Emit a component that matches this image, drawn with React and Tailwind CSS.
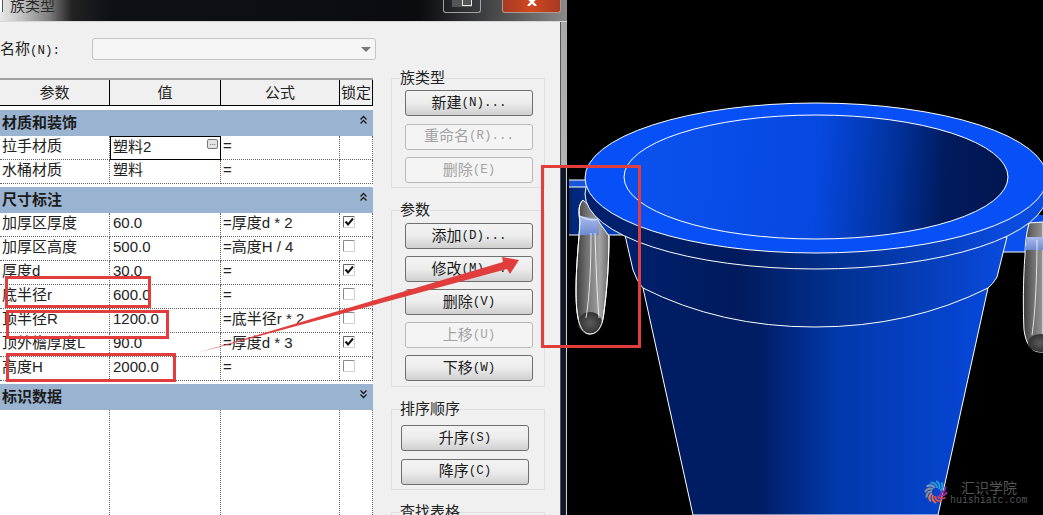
const rowsA = [
  { name: '拉手材质', value: '塑料2', formula: '=', active: true },
  { name: '水桶材质', value: '塑料', formula: '=' },
];

const rowsB = [
  { name: '加厚区厚度', value: '60.0', formula: '=厚度d * 2', check: true },
  { name: '加厚区高度', value: '500.0', formula: '=高度H / 4', check: false },
  { name: '厚度d', value: '30.0', formula: '=', check: true },
  { name: '底半径r', value: '600.0', formula: '=', check: false },
  { name: '顶半径R', value: '1200.0', formula: '=底半径r * 2', check: false },
  { name: '顶外檐厚度L', value: '90.0', formula: '=厚度d * 3', check: true },
  { name: '高度H', value: '2000.0', formula: '=', check: false },
];

const spokes = [
  { a: 0, c: '#2a9bd6' }, { a: 30, c: '#2a9bd6' }, { a: 60, c: '#8a2fb0' }, { a: 90, c: '#a02fa0' },
  { a: 120, c: '#c9405e' }, { a: 150, c: '#d8504f' }, { a: 180, c: '#d8694f' }, { a: 210, c: '#d8795f' },
  { a: 240, c: '#8a8f9a' }, { a: 270, c: '#8a8f9a' }, { a: 300, c: '#7a9ab0' }, { a: 330, c: '#2a9bd6' },
];

function Chevrons({ down }) {
  return (
    <svg width="9" height="10" viewBox="0 0 9 10" fill="none" stroke="#1a1a1a" strokeWidth="1.3" className={down ? 'rotate-180' : ''}>
      <path d="M1.5 4.5 L4.5 1.5 L7.5 4.5" />
      <path d="M1.5 8.5 L4.5 5.5 L7.5 8.5" />
    </svg>
  );
}

function Section({ title, down, className = '' }) {
  return (
    <div className={`h-[26px] bg-[#9ab3d1] flex items-center justify-between pl-[2px] pr-[5px] w-[373px] ${className}`}>
      <span className="text-[15px] leading-[20px] font-bold text-[#1c1c1c]">{title}</span>
      <span className="-mt-[6px]"><Chevrons down={down} /></span>
    </div>
  );
}

function CheckBox({ on }) {
  return (
    <svg width="12" height="12" viewBox="0 0 12 12" fill="none" className="-mt-[3px]">
      <path d="M0.5 11.5 V0.5 H11.5" stroke={on ? '#666' : '#8a8a8a'} />
      <path d="M11.5 0.5 V11.5 H0.5" stroke="#d0d0d0" />
      {on && <path d="M2.5 5.5 L5 8.5 L10 2.5" stroke="#111" strokeWidth="2" />}
    </svg>
  );
}

function Row({ row }) {
  const cell = 'h-[24px] pb-[3px] border-r border-b border-dotted border-[#666] flex items-center text-[15px] leading-[20px] text-[#222] overflow-hidden whitespace-nowrap';
  return (
    <div className="grid grid-cols-[110px_111px_119px_33px]">
      <div className={`${cell} pl-[2px]`}>{row.name}</div>
      {row.active ? (
        <div className="h-[24px] pb-[3px] border border-black flex items-center justify-between pl-[2px] pr-[2px] text-[15px] leading-[20px] text-[#222]">
          {row.value}
          <span className="w-[11px] h-[10px] -mt-[5px] rounded-[2px] border border-[#777] bg-[#e4e4e4] text-[8px] leading-[6px] text-center text-[#333]">...</span>
        </div>
      ) : (
        <div className={`${cell} pl-[3px]`}>{row.value}</div>
      )}
      <div className={`${cell} pl-[2px]`}>{row.formula}</div>
      <div className={`${cell} justify-start pl-[3px]`}>
        {row.check !== undefined && <CheckBox on={row.check} />}
      </div>
    </div>
  );
}

function Btn({ cn, keyText, disabled }) {
  return (
    <button
      className={`w-[128px] h-[26px] shrink-0 rounded-[3px] border flex items-center justify-center text-[15px] ${
        disabled
          ? 'border-[#b9b9b9] bg-[#f4f4f4] text-[#a3a3a3]'
          : 'border-[#6f6f6f] bg-gradient-to-b from-[#f3f3f3] via-[#ececec] to-[#cfcfcf] text-[#1a1a1a]'
      }`}
    >
      {cn}
      <span className="font-['Liberation_Mono',monospace] text-[12.5px]">{keyText}</span>
    </button>
  );
}

function Group({ label, children, height, inner }) {
  return (
    <fieldset className={`border border-[#dedede] shrink-0 ${height}`}>
      <legend className="ml-[8px] text-[15px] leading-[18px] text-[#222]">{label}</legend>
      <div className={`flex flex-col ${inner}`}>{children}</div>
    </fieldset>
  );
}

function Bucket() {
  return (
    <svg viewBox="567 0 476 515" className="w-full h-full block" stroke="#fff" strokeWidth="1">
      <defs>
        <linearGradient id="bowl" gradientUnits="userSpaceOnUse" x1="624" y1="170" x2="1010" y2="200">
          <stop offset="0" stopColor="#0a52f0" />
          <stop offset="0.5" stopColor="#0648e0" />
          <stop offset="0.7" stopColor="#01319a" />
          <stop offset="0.83" stopColor="#001a5c" />
          <stop offset="1" stopColor="#001650" />
        </linearGradient>
        <linearGradient id="band" gradientUnits="userSpaceOnUse" x1="620" y1="0" x2="1010" y2="0">
          <stop offset="0" stopColor="#00206e" />
          <stop offset="0.3" stopColor="#001a5c" />
          <stop offset="0.55" stopColor="#01308f" />
          <stop offset="1" stopColor="#0a4be0" />
        </linearGradient>
        <linearGradient id="cone" gradientUnits="userSpaceOnUse" x1="650" y1="0" x2="985" y2="0">
          <stop offset="0" stopColor="#001c62" />
          <stop offset="0.32" stopColor="#001c62" />
          <stop offset="0.55" stopColor="#0138aa" />
          <stop offset="1" stopColor="#0647d8" />
        </linearGradient>
        <linearGradient id="tab" gradientUnits="userSpaceOnUse" x1="569" y1="0" x2="625" y2="0">
          <stop offset="0" stopColor="#00236e" />
          <stop offset="1" stopColor="#0a45d2" />
        </linearGradient>
        <linearGradient id="handle" gradientUnits="userSpaceOnUse" x1="576" y1="0" x2="609" y2="0">
          <stop offset="0" stopColor="#3a3a3a" />
          <stop offset="0.3" stopColor="#6e6e6e" />
          <stop offset="0.72" stopColor="#a4a4a4" />
          <stop offset="1" stopColor="#6a6a6a" />
        </linearGradient>
        <linearGradient id="handleR" gradientUnits="userSpaceOnUse" x1="1023" y1="0" x2="1056" y2="0">
          <stop offset="0" stopColor="#3a3a3a" />
          <stop offset="0.3" stopColor="#6e6e6e" />
          <stop offset="0.72" stopColor="#a4a4a4" />
          <stop offset="1" stopColor="#6a6a6a" />
        </linearGradient>
        <linearGradient id="pale" x1="0" y1="0" x2="0" y2="1">
          <stop offset="0" stopColor="#a9bcee" />
          <stop offset="1" stopColor="#6f8ad0" />
        </linearGradient>
        <radialGradient id="cap">
          <stop offset="0" stopColor="#5a5a5a" />
          <stop offset="1" stopColor="#333" />
        </radialGradient>
      </defs>

      {/* side tabs */}
      <path d="M569 180 H640 V235 H569 Z" fill="url(#tab)" stroke="none" />
      <path d="M569 180 H590 V187 H569 Z" fill="#1a56d8" stroke="none" />
      <path d="M569 180 H590 M569 187 H590 M569 235 H628" fill="none" />
      <path d="M1000 215 H1043 V252 H1000 Z" fill="#0a50ee" stroke="none" />
      <path d="M1002 252 H1043" fill="none" />

      {/* handles */}
      <path d="M583 200 C579 204 578 210 580 222 C579 240 576 265 576 290 C576 312 578 334 590 334 C600 334 603 322 604 312 C607 290 609 262 609 236 L599 222 C598 216 590 206 583 200 Z" fill="url(#handle)" />
      <path d="M580 216 L598 219 L599 235 L579 235 Z" fill="url(#pale)" stroke="none" />
      <ellipse cx="590" cy="323" rx="12" ry="11" fill="url(#cap)" stroke="none" />
      <path d="M583 200 C579 204 578 210 580 222 C579 240 576 265 576 290 C576 312 578 334 590 334 C600 334 603 322 604 312 C607 290 609 262 609 236" fill="none" />
      <path d="M591 233 C591 260 590 295 586 318 M595 233 C596 265 597 295 599 318 M580 216 Q590 222 598 219" fill="none" strokeWidth="0.8" />
      <path d="M1029 223 C1026 235 1025 245 1025 255 C1023 280 1023 310 1024 330 C1026 345 1032 352 1040 352 H1043 V222 Z" fill="url(#handleR)" />
      <path d="M1027 237 H1043 V250 H1025 Z" fill="url(#pale)" stroke="none" />
      <ellipse cx="1040" cy="343" rx="12" ry="9" fill="url(#cap)" stroke="none" />
      <path d="M1037 240 C1037 280 1035 315 1032 335" fill="none" strokeWidth="0.8" />

      {/* cone and thick zone */}
      <path d="M643 288 L693 515 H938 L988 288 Z" fill="url(#cone)" />
      <path d="M625 235 L633 270 Q637 282 643 288 Q720 327 815 327 Q910 327 988 288 Q993 284 997 277 L1007 237 Z" fill="url(#band)" />

      {/* rim */}
      <ellipse cx="816" cy="194" rx="231" ry="75" fill="url(#band)" />
      <ellipse cx="816" cy="178" rx="231" ry="75" fill="#0750f7" />
      <ellipse cx="816" cy="177" rx="192" ry="62" fill="url(#bowl)" />

      {/* watermark logo */}
      <g fill="none" strokeWidth="2">
        {spokes.map((s) => (
          <path key={s.a} d="M936 481 Q941 484 939 489" stroke={s.c} transform={`rotate(${s.a} 936 492)`} />
        ))}
      </g>
    </svg>
  );
}

export default function App() {
  return (
    <div className="relative w-[1043px] h-[515px] overflow-hidden flex bg-black font-['Liberation_Sans','Noto_Sans_CJK_SC',sans-serif]">
      {/* dialog window with its frame */}
      <div className="w-[567px] h-full shrink-0 flex flex-col">
        <div className="h-[22px] shrink-0 pr-[6px] flex items-start justify-between border-b border-[#d8d8d8] bg-[linear-gradient(90deg,#e8e8e8_0,#c0c0c0_22px,#808080_48px,#222_72px,#0d1116_110px,#0a0c10_420px,#555_510px,#8a8a8a_100%)]">
          <div className="flex items-center h-[12px]">
            <span className="w-[3px] h-[12px] bg-white border-r border-[#555]" />
            <span className="ml-[7px] text-[15px] leading-[12px] text-[#2a2a2a]">族类型</span>
          </div>
          <div className="flex items-start">
            <div className="w-[38px] h-[13px] mr-[21px] rounded-b-[3px] border border-t-0 border-[#a0a4a8] flex justify-center">
              <span className="w-[20px] h-[7px] bg-[#555] flex justify-end">
                <span className="w-[10px] h-[6px] border border-t-0 border-[#e8e8e8]" />
              </span>
            </div>
            <div className="w-[59px] h-[13px] rounded-b-[3px] border border-t-0 border-[#b09a90] bg-gradient-to-r from-[#a83a22] via-[#d0481f] to-[#a83a22] flex justify-center">
              <svg width="14" height="6" viewBox="0 0 14 6" stroke="#fff" strokeWidth="2.4"><path d="M3 -2 L11 6 M11 -2 L3 6" /></svg>
            </div>
          </div>
        </div>

        <div className="flex-1 min-h-0 flex">
          <div className="w-[561px] shrink-0 flex bg-[#f0f0f0] border-r border-[#555] overflow-hidden">
            {/* left column */}
            <div className="w-[376px] shrink-0 flex flex-col">
              <div className="h-[22px] flex items-center mt-[16px] mb-[18px]">
                <span className="w-[92px] mt-[2px] text-[15px] leading-[20px] text-[#222]">
                  名称<span className="font-['Liberation_Mono',monospace] text-[12.5px]">(N):</span>
                </span>
                <div className="flex-1 h-[22px] rounded-[3px] border border-[#c4c4c4] bg-[#f5f5f5] flex items-center justify-end pr-[4px]">
                  <span className="w-0 h-0 border-x-[5px] border-x-transparent border-t-[5px] border-t-[#777]" />
                </div>
              </div>

              <div className="flex-1 min-h-0 w-[373px] flex flex-col bg-white">
                <div className="h-[28px] shrink-0 grid grid-cols-[110px_111px_119px_33px] border-t-2 border-[#a0a0a0] bg-[#f0f0f0] text-[15px] leading-[20px] text-[#222]">
                  <div className="border-r border-b border-black flex items-center justify-center">参数</div>
                  <div className="border-r border-b border-black flex items-center justify-center">值</div>
                  <div className="border-r border-b border-black flex items-center justify-center">公式</div>
                  <div className="border-r border-b border-black flex items-center justify-center whitespace-nowrap">锁定</div>
                </div>
                <Section title="材质和装饰" className="mt-[4px]" />
                {rowsA.map((r) => <Row key={r.name} row={r} />)}
                <Section title="尺寸标注" className="mt-[3px]" />
                {rowsB.map((r) => <Row key={r.name} row={r} />)}
                <Section title="标识数据" down className="mt-[3px]" />
                <div className="flex-1 grid grid-cols-[110px_111px_119px_33px]">
                  <div className="border-r border-dotted border-[#666]" />
                  <div className="border-r border-dotted border-[#666]" />
                  <div className="border-r border-dotted border-[#666]" />
                  <div className="border-r border-dotted border-[#666]" />
                </div>
              </div>
            </div>

            {/* right column */}
            <div className="ml-[15px] w-[154px] shrink-0 pt-[47px] flex flex-col gap-[13px]">
              <Group label="族类型" height="h-[119px]" inner="pl-[13px] pt-[3px] gap-[7.5px]">
                <Btn cn="新建" keyText="(N)..." />
                <Btn cn="重命名" keyText="(R)..." disabled />
                <Btn cn="删除" keyText="(E)" disabled />
              </Group>
              <Group label="参数" height="h-[186px]" inner="pl-[13px] pt-[4px] gap-[7px]">
                <Btn cn="添加" keyText="(D)..." />
                <Btn cn="修改" keyText="(M)..." />
                <Btn cn="删除" keyText="(V)" />
                <Btn cn="上移" keyText="(U)" disabled />
                <Btn cn="下移" keyText="(W)" />
              </Group>
              <Group label="排序顺序" height="h-[90px]" inner="pl-[9px] pt-[7px] gap-[7.5px]">
                <Btn cn="升序" keyText="(S)" />
                <Btn cn="降序" keyText="(C)" />
              </Group>
              <Group label="查找表格" height="h-[60px]" inner="" />
            </div>
          </div>

          {/* frame strip, dark where the drawing window covers it */}
          <div className="flex-1 flex flex-col">
            <div className="h-[145px] bg-gradient-to-b from-[#a8a8a8] to-[#b4b4b4]" />
            <div className="flex-1 bg-gradient-to-r from-[#0c1420] to-[#101c34] border-r border-[#cfcfcf]" />
          </div>
        </div>
      </div>

      {/* drawing view */}
      <div className="relative flex-1 min-w-0 bg-black">
        <Bucket />
        <div className="absolute left-[394px] top-[480px] text-[14px] leading-[16px] text-[#555]">汇识学院</div>
        <div className="absolute left-[383px] top-[495px] font-['Liberation_Mono',monospace] text-[10px] leading-[12px] text-[#555] tracking-[-0.05px] whitespace-nowrap">huishiatc.com</div>
      </div>

      {/* red annotations */}
      <div className="absolute left-[5px] top-[276px] w-[146px] h-[32px] border-[3px] border-[#e23d3d]" />
      <div className="absolute left-[6px] top-[310px] w-[163px] h-[29px] border-[3px] border-[#e23d3d]" />
      <div className="absolute left-[6px] top-[353px] w-[170px] h-[29px] border-[3px] border-[#e23d3d]" />
      <div className="absolute left-[541px] top-[165px] w-[100px] h-[183px] border-[3px] border-[#e23d3d]" />
      <svg className="absolute left-0 top-0 pointer-events-none" width="1043" height="515" viewBox="0 0 1043 515">
        <path d="M197 353 L503 262 L502 257 L519 260 L510 274 L507 269 Z" fill="#e23d3d" />
      </svg>
    </div>
  );
}
